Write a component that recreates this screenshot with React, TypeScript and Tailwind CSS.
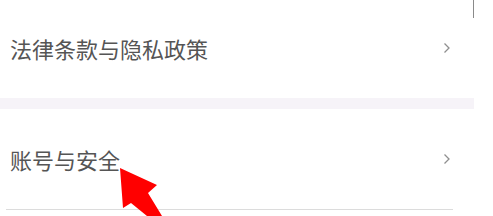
import React from "react";

const Chevron = () => (
  <svg width="8" height="12" viewBox="0 0 8 12" className="shrink-0">
    <path d="M1.5 1.5 L6 6 L1.5 10.5" fill="none" stroke="#8f8f8f" strokeWidth="1.3" />
  </svg>
);

const Row = ({ label, className }: { label: string; className: string }) => (
  <div className={`flex items-center justify-between pl-[10px] pr-[23px] ${className}`}>
    <span className="text-[22px] leading-none text-[#555555]">{label}</span>
    <Chevron />
  </div>
);

export default function App() {
  return (
    <div
      className="relative h-[216px] w-[493px] overflow-hidden bg-white"
      style={{ fontFamily: '"Noto Sans CJK SC", "Noto Sans", sans-serif' }}
    >
      <div className="w-[474px]">
        <Row label="法律条款与隐私政策" className="h-[98px] pb-[2px]" />
        <div className="h-[11px] bg-[#f6f3f8]" />
        <Row label="账号与安全" className="h-[100px]" />
        <div className="ml-[6px] h-px w-[447px] bg-[#dcdcdc]" />
      </div>

      {/* scrollbar edge */}
      <div className="absolute left-[473px] top-0 h-[18px] w-px bg-[#8a8a8a]" />

      {/* red annotation arrow */}
      <svg className="absolute left-0 top-0" width="493" height="216" viewBox="0 0 493 216">
        <polygon
          points="120,168 157,185 148,193 162,216 147,216 131,203 123,208"
          fill="#ff0000"
        />
      </svg>
    </div>
  );
}
